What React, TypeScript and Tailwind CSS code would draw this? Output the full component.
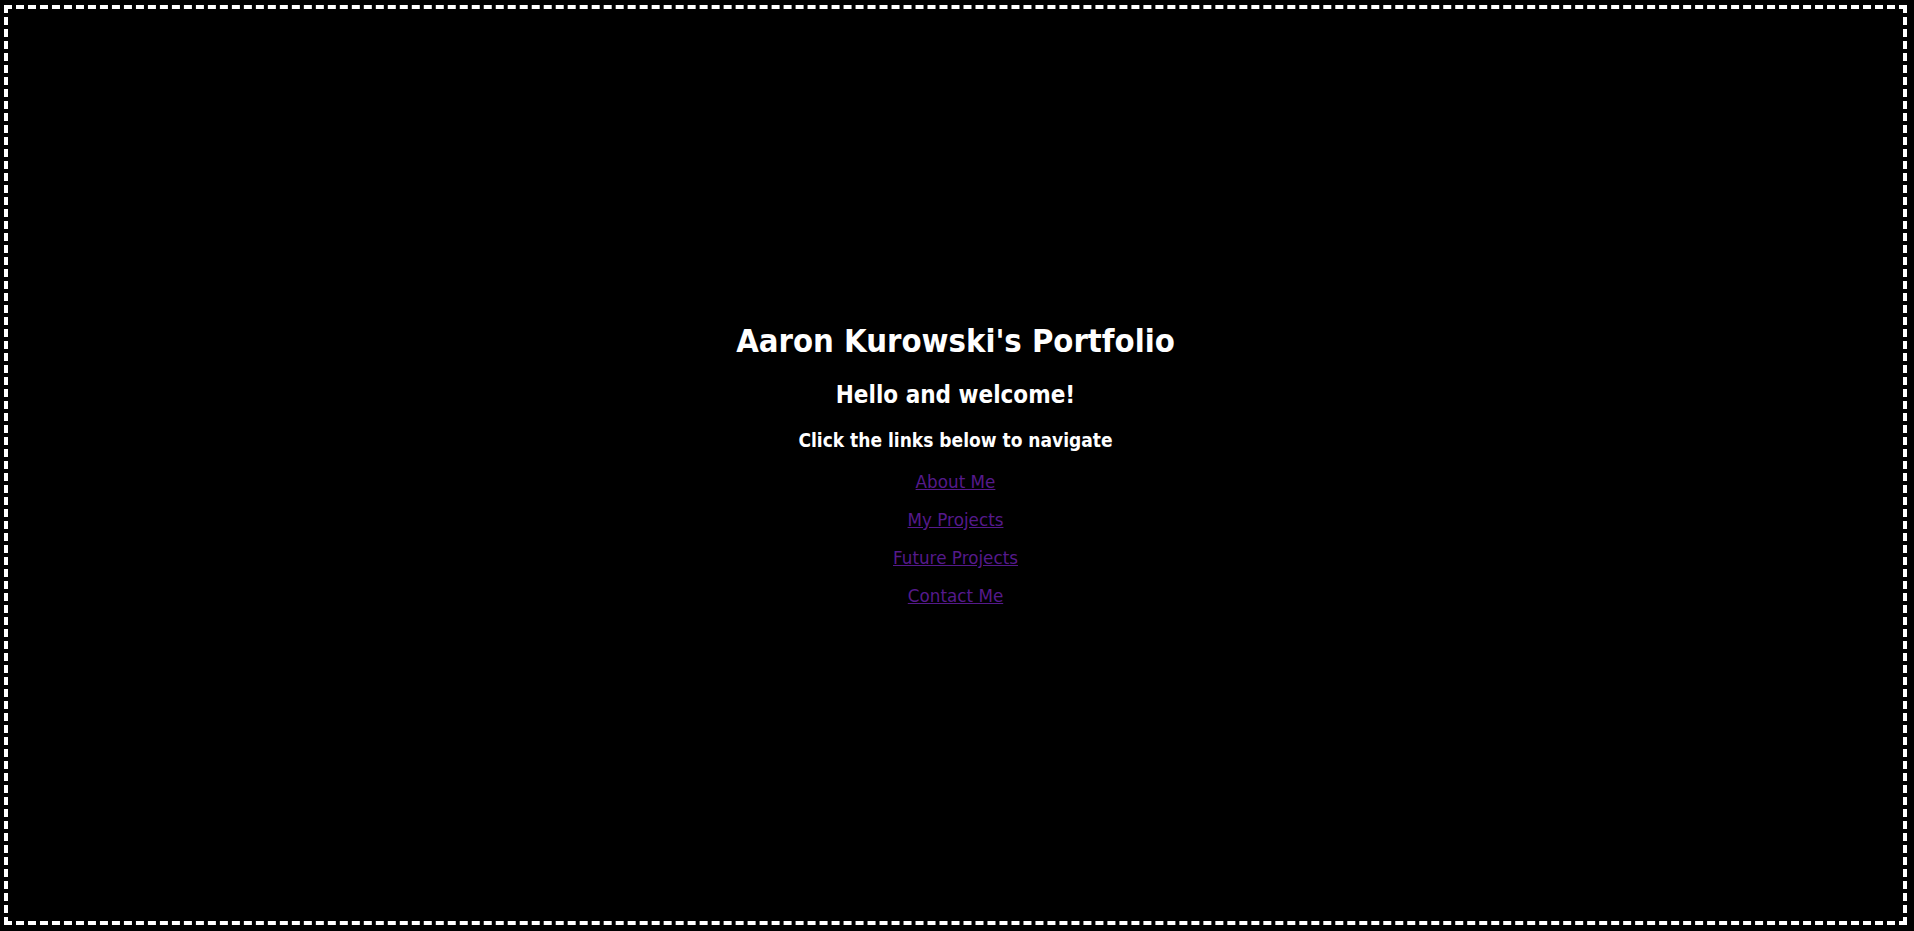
const links = ['About Me', 'My Projects', 'Future Projects', 'Contact Me']

export default function App() {
  return (
    <div className="h-[931px] bg-black pt-[5px] pl-[4px] pr-[7px] pb-[6px]">
      <div className="flex h-full flex-col items-center justify-center border-4 border-dashed border-white pb-[2px] text-center font-['DejaVu_Sans',sans-serif] text-white">
        <h1 className="font-['DejaVu_Sans_Condensed','DejaVu_Sans',sans-serif] text-[32.5px] leading-[40px] font-bold">
          Aaron Kurowski's Portfolio
        </h1>
        <h2 className="mt-5 font-['DejaVu_Sans_Condensed','DejaVu_Sans',sans-serif] text-[24px] leading-[28px] font-bold">
          Hello and welcome!
        </h2>
        <h3 className="mt-5 font-['DejaVu_Sans_Condensed','DejaVu_Sans',sans-serif] text-[19px] leading-[22px] font-bold">
          Click the links below to navigate
        </h3>
        <nav className="mt-5 flex flex-col items-center gap-4">
          {links.map((label) => (
            <p key={label} className="text-[16.8px] leading-[22px]">
              <a href="#" className="text-[#551a8b] underline">
                {label}
              </a>
            </p>
          ))}
        </nav>
      </div>
    </div>
  )
}
